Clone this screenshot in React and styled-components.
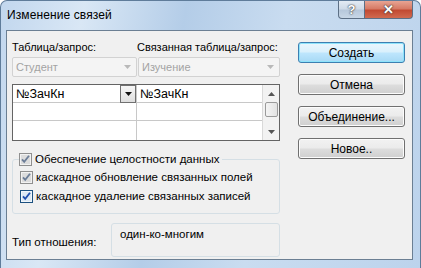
import React from "react";
import styled, { createGlobalStyle } from "styled-components";

const Global = createGlobalStyle`
  html, body { margin: 0; padding: 0; overflow: hidden; background: #fff; }
  body { font-family: "Liberation Sans", Arial, sans-serif; }
`;

const FONT = `"Liberation Sans", Arial, sans-serif`;

const Window = styled.div`
  width: 421px;
  height: 268px;
  box-sizing: border-box;
  display: flex;
  flex-direction: column;
  border-radius: 7px 7px 0 0;
  border: 1px solid #5f7c9a;
  border-bottom: none;
  background: linear-gradient(100deg, #c2d7ee 0%, #d9e7f5 18%, #b4cde8 40%, #c9dcf0 62%, #bcd3ec 100%);
  overflow: hidden;
  font-family: ${FONT};
  font-size: 11px;
  color: #000;
`;

const TitleBar = styled.div`
  height: 29px;
  display: flex;
  align-items: flex-start;
  justify-content: space-between;
`;

const Title = styled.div`
  padding: 7px 0 0 6px;
  font-size: 12px;
  letter-spacing: 0.1px;
  color: #000;
`;

const Controls = styled.div`
  display: flex;
  margin-right: 7px;
`;

const CtrlBtn = styled.div`
  width: ${(p) => p.$w}px;
  height: 18px;
  box-sizing: border-box;
  display: flex;
  align-items: center;
  justify-content: center;
  border: 1px solid #5c6f85;
  border-top: none;
  background: ${(p) =>
    p.$close
      ? "linear-gradient(#e8a493 0%, #d67b66 45%, #c24a32 55%, #d16a4f 100%)"
      : "linear-gradient(#e3ebf4 0%, #cfdbe8 45%, #b7c8db 55%, #c8d7e7 100%)"};
  border-radius: ${(p) => (p.$close ? "0 0 4px 0" : "0 0 0 4px")};
  border-left: ${(p) => (p.$close ? "none" : "1px solid #5c6f85")};
  color: #fff;
  font-weight: bold;
  font-size: 13px;
  text-shadow: 0 0 2px #333, 0 0 1px #333;
`;

const Client = styled.div`
  margin: 0 7px 8px 5px;
  flex: 1;
  box-sizing: border-box;
  border: 1px solid #6b7f93;
  background: #f0f0f0;
  display: flex;
`;

const LeftCol = styled.div`
  width: 268px;
  margin-left: 5px;
  display: flex;
  flex-direction: column;
`;

const LabelRow = styled.div`
  display: flex;
  margin-top: 10px;
  height: 13px;
  line-height: 13px;
`;

const Label = styled.div`
  width: ${(p) => p.$w}px;
  white-space: nowrap;
`;

const ComboRow = styled.div`
  display: flex;
  margin-top: 3px;
  gap: 1px;
`;

const Combo = styled.div`
  width: ${(p) => p.$w}px;
  height: 20px;
  box-sizing: border-box;
  border: 1px solid #d2d2d2;
  border-radius: 2px;
  background: #f4f4f4;
  display: flex;
  align-items: center;
  justify-content: space-between;
  padding: 0 5px 0 3px;
  color: #a3a3a3;
`;

const Grid = styled.div`
  margin-top: 7px;
  width: 268px;
  height: 57px;
  box-sizing: border-box;
  border: 1px solid #646464;
  background: #fff;
  display: flex;
`;

const Cells = styled.div`
  flex: 1;
  display: grid;
  grid-template-columns: 124px 1fr;
  grid-template-rows: 18px 18px 1fr;
`;

const Cell = styled.div`
  box-sizing: border-box;
  border-bottom: ${(p) => (p.$last ? "none" : "1px solid #c8c8c8")};
  border-right: ${(p) => (p.$left ? "1px solid #c8c8c8" : "none")};
  display: flex;
  align-items: center;
  justify-content: space-between;
  padding-left: 3px;
  font-size: 12.5px;
`;

const CellDrop = styled.div`
  width: 16px;
  height: 18px;
  box-sizing: border-box;
  border: 1px solid #707070;
  background: linear-gradient(#f6f6f6, #dedede);
  display: flex;
  align-items: center;
  justify-content: center;
`;

const ScrollBar = styled.div`
  width: 16px;
  border-left: 1px solid #d9d9d9;
  background: #f2f2f2;
  display: flex;
  flex-direction: column;
  align-items: center;
`;

const ScrollArrow = styled.div`
  height: 17px;
  width: 100%;
  display: flex;
  align-items: center;
  justify-content: center;
  margin-top: ${(p) => (p.$bottom ? "auto" : "0")};
`;

const Thumb = styled.div`
  width: 13px;
  height: 15px;
  box-sizing: border-box;
  border: 1px solid #9a9a9a;
  border-radius: 2px;
  background: linear-gradient(90deg, #f4f4f4, #e2e2e2);
`;

const Group = styled.fieldset`
  margin: 11px 0 0 0;
  padding: 4px 0 10px 7px;
  width: 268px;
  box-sizing: border-box;
  border: 1px solid #d5dfe5;
  border-radius: 3px;
  display: flex;
  flex-direction: column;
  gap: 5px;
`;

const Legend = styled.legend`
  padding: 0 3px 0 0;
  margin-left: -1px;
`;

const CheckRow = styled.label`
  display: flex;
  align-items: center;
  gap: 3px;
  height: 14px;
  line-height: 14px;
  font-size: 11.5px;
  white-space: nowrap;
`;

const RelationRow = styled.div`
  display: flex;
  margin-top: 9px;
  align-items: flex-start;
`;

const RelLabel = styled.div`
  width: 99px;
  padding-top: 13px;
  font-size: 11.5px;
`;

const RelBox = styled.div`
  width: 169px;
  height: 34px;
  box-sizing: border-box;
  border: 1px solid #d5dfe5;
  border-radius: 3px;
  padding: 4px 0 0 8px;
  font-size: 11.5px;
`;

const RightCol = styled.div`
  margin-left: 18px;
  padding-top: 11px;
  display: flex;
  flex-direction: column;
  gap: 11px;
`;

const Button = styled.div`
  width: 107px;
  height: 21px;
  box-sizing: border-box;
  border: 1px solid ${(p) => (p.$default ? "#3c7fb1" : "#707070")};
  border-radius: 3px;
  background: ${(p) =>
    p.$default
      ? "linear-gradient(#eaf6fd 0%, #d9f0fc 48%, #bee6fd 52%, #a7d9f5 100%)"
      : "linear-gradient(#f2f2f2 0%, #ebebeb 48%, #dddddd 52%, #cfcfcf 100%)"};
  box-shadow: ${(p) => (p.$default ? "inset 0 0 0 1px #8ee3fb" : "inset 0 0 0 1px #fcfcfc")};
  display: flex;
  align-items: center;
  justify-content: center;
  font-size: 12px;
`;

const Arrow = ({ color = "#444", w = 7 }) => (
  <svg width={w} height="4" viewBox="0 0 7 4">
    <path d="M0 0 H7 L3.5 4 Z" fill={color} />
  </svg>
);

const UpArrow = ({ color = "#555" }) => (
  <svg width="7" height="4" viewBox="0 0 7 4">
    <path d="M0 4 H7 L3.5 0 Z" fill={color} />
  </svg>
);

const CheckBox = ({ enabled }) => (
  <svg width="13" height="13" viewBox="0 0 13 13">
    <rect x="0.5" y="0.5" width="12" height="12" fill={enabled ? "#f0f6fb" : "#f2f2f2"} stroke={enabled ? "#1c5180" : "#8f8f8f"} />
    <rect x="2" y="2" width="9" height="9" fill={enabled ? "#dbe8f4" : "#dcdcdc"} />
    <path
      d="M3 6.3 L5.2 8.8 L10 2.8"
      fill="none"
      stroke={enabled ? "#1f4fae" : "#6d7e98"}
      strokeWidth="1.8"
    />
  </svg>
);

export default function App() {
  return (
    <>
      <Global />
      <Window>
        <TitleBar>
          <Title>Изменение связей</Title>
          <Controls>
            <CtrlBtn $w={27}>?</CtrlBtn>
            <CtrlBtn $w={48} $close>
              ✕
            </CtrlBtn>
          </Controls>
        </TitleBar>
        <Client>
          <LeftCol>
            <LabelRow>
              <Label $w={125}>Таблица/запрос:</Label>
              <Label>Связанная таблица/запрос:</Label>
            </LabelRow>
            <ComboRow>
              <Combo $w={125}>
                Студент <Arrow color="#b9b9b9" />
              </Combo>
              <Combo $w={142}>
                Изучение <Arrow color="#b9b9b9" />
              </Combo>
            </ComboRow>
            <Grid>
              <Cells>
                <Cell $left>
                  №ЗачКн
                  <CellDrop>
                    <Arrow color="#111" />
                  </CellDrop>
                </Cell>
                <Cell>№ЗачКн</Cell>
                <Cell $left />
                <Cell />
                <Cell $left $last />
                <Cell $last />
              </Cells>
              <ScrollBar>
                <ScrollArrow>
                  <UpArrow />
                </ScrollArrow>
                <Thumb />
                <ScrollArrow $bottom>
                  <Arrow color="#555" />
                </ScrollArrow>
              </ScrollBar>
            </Grid>
            <Group>
              <Legend>
                <CheckRow>
                  <CheckBox />
                  Обеспечение целостности данных
                </CheckRow>
              </Legend>
              <CheckRow>
                <CheckBox />
                каскадное обновление связанных полей
              </CheckRow>
              <CheckRow>
                <CheckBox enabled />
                каскадное удаление связанных записей
              </CheckRow>
            </Group>
            <RelationRow>
              <RelLabel>Тип отношения:</RelLabel>
              <RelBox>один-ко-многим</RelBox>
            </RelationRow>
          </LeftCol>
          <RightCol>
            <Button $default>Создать</Button>
            <Button>Отмена</Button>
            <Button>Объединение...</Button>
            <Button>Новое..</Button>
          </RightCol>
        </Client>
      </Window>
    </>
  );
}
